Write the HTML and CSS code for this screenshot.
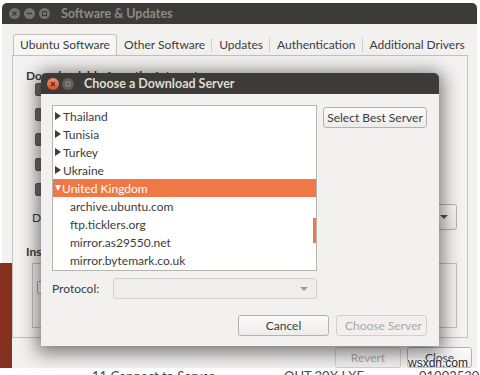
FILE: index.html
```html
<!DOCTYPE html>
<html lang="en">
<head>
    <meta charset="UTF-8">
    <meta name="viewport" content="width=device-width, initial-scale=1.0">
    <title>Software &amp; Updates - Choose a Download Server</title>
    <link rel="stylesheet" href="styles.css">
</head>
<body>
    <div class="screen">
        <div class="top-edge"></div>

        <div class="main-window">
            <div class="titlebar">
                <div class="wm-buttons">
                    <svg class="wm-btn" width="11" height="11" viewBox="0 0 11 11"><circle cx="5.5" cy="5.5" r="5.5" fill="#74736e"/><path d="M3.5 3.5 L7.5 7.5 M7.5 3.5 L3.5 7.5" stroke="#3c3b37" stroke-width="1.3"/></svg>
                    <svg class="wm-btn" width="11" height="11" viewBox="0 0 11 11"><circle cx="5.5" cy="5.5" r="5.5" fill="#74736e"/><path d="M3 5.5 H8" stroke="#3c3b37" stroke-width="1.4"/></svg>
                    <svg class="wm-btn" width="11" height="11" viewBox="0 0 11 11"><circle cx="5.5" cy="5.5" r="5.5" fill="#74736e"/><rect x="3.5" y="3.5" width="4" height="4" fill="none" stroke="#3c3b37" stroke-width="1"/></svg>
                </div>
                <span class="window-title inactive">Software &amp; Updates</span>
            </div>

            <div class="window-body">
                <div class="tabs">
                    <div class="tab active">Ubuntu Software</div>
                    <div class="tab">Other Software</div>
                    <div class="tab">Updates</div>
                    <div class="tab">Authentication</div>
                    <div class="tab last">Additional Drivers</div>
                </div>

                <div class="panel">
                    <div class="section-title">Downloadable from the Internet</div>
                    <div class="check-list">
                        <div class="check-row"><span class="checkbox checked"></span>Canonical-supported free and open-source software (main)</div>
                        <div class="check-row"><span class="checkbox checked"></span>Community-maintained free and open-source software (universe)</div>
                        <div class="check-row"><span class="checkbox checked"></span>Proprietary drivers for devices (restricted)</div>
                        <div class="check-row"><span class="checkbox checked"></span>Software restricted by copyright or legal issues (multiverse)</div>
                        <div class="check-row"><span class="checkbox mixed"></span>Source code</div>
                    </div>
                    <div class="download-row">
                        <span class="download-label">Download from:</span>
                        <div class="combo"><span>Server for United Kingdom</span><span class="combo-arrow"></span></div>
                    </div>
                    <div class="section-title cd-title">Installable from CD-ROM/DVD</div>
                    <div class="cd-frame">
                        <span class="checkbox"></span>
                    </div>
                </div>

                <div class="window-actions">
                    <button class="btn revert" disabled>Revert</button>
                    <button class="btn close-btn">Close</button>
                </div>
            </div>
        </div>

        <div class="task-strip">
            <div class="task-red"></div>
            <span class="task-text first">11 Connect to Server</span>
            <span class="task-sep"></span>
            <span class="task-text">OUT 30X LXE</span>
            <span class="task-text">01002530L</span>
        </div>

        <div class="wallpaper-edge"></div>

        <div class="dialog">
            <div class="titlebar dialog-titlebar">
                <div class="wm-buttons dialog-buttons">
                    <svg class="wm-btn" width="12" height="12" viewBox="0 0 12 12"><defs><linearGradient id="closeGrad" x1="0" y1="0" x2="0" y2="1"><stop offset="0" stop-color="#f7916a"/><stop offset="1" stop-color="#dd4d22"/></linearGradient></defs><circle cx="6" cy="6" r="6" fill="url(#closeGrad)"/><path d="M4 4 L8 8 M8 4 L4 8" stroke="#3c3b37" stroke-width="1.3"/></svg>
                    <svg class="wm-btn" width="12" height="12" viewBox="0 0 12 12"><circle cx="6" cy="6" r="6" fill="#5f5e5a"/><rect x="4" y="4" width="4" height="4" fill="none" stroke="#8e8c86" stroke-width="1"/></svg>
                </div>
                <span class="window-title">Choose a Download Server</span>
            </div>

            <div class="dialog-body">
                <div class="server-row">
                    <div class="tree">
                        <div class="tree-row"><span class="expander"></span>Thailand</div>
                        <div class="tree-row"><span class="expander"></span>Tunisia</div>
                        <div class="tree-row"><span class="expander"></span>Turkey</div>
                        <div class="tree-row"><span class="expander"></span>Ukraine</div>
                        <div class="tree-row selected"><span class="expander open"></span>United Kingdom</div>
                        <div class="tree-row child">archive.ubuntu.com</div>
                        <div class="tree-row child">ftp.ticklers.org</div>
                        <div class="tree-row child">mirror.as29550.net</div>
                        <div class="tree-row child">mirror.bytemark.co.uk</div>
                        <div class="tree-row child">mirror.ox.ac.uk</div>
                        <div class="scroll-indicator"></div>
                    </div>
                    <button class="btn best-server">Select Best Server</button>
                </div>

                <div class="protocol-row">
                    <span class="protocol-label">Protocol:</span>
                    <div class="combo disabled"><span></span><span class="combo-arrow"></span></div>
                </div>

                <div class="dialog-actions">
                    <button class="btn">Cancel</button>
                    <button class="btn" disabled>Choose Server</button>
                </div>
            </div>
        </div>

        <div class="watermark">wsxdn.com</div>
    </div>
</body>
</html>
```

FILE: styles.css
```css
* {
    box-sizing: border-box;
}

body {
    margin: 0;
    font-family: Lato, "Open Sans", sans-serif;
    font-size: 12px;
    color: #3c3c3c;
    background-color: #ffffff;
}

.screen {
    position: relative;
    width: 480px;
    height: 375px;
    overflow: hidden;
    background-color: #ffffff;
}

.top-edge {
    height: 3px;
}

/* main window behind */
.main-window {
    margin-left: 2px;
    width: 475px;
    height: 365px;
    background-color: #f2f1f0;
    border-radius: 5px 5px 0 0;
}

.titlebar {
    height: 21px;
    background-color: #3c3b37;
    border-radius: 5px 5px 0 0;
    display: flex;
    align-items: center;
    padding-left: 7px;
}

.wm-buttons {
    display: flex;
    gap: 4px;
}

.wm-btn {
    display: block;
}

.window-title {
    margin-left: 11px;
    font-weight: bold;
    font-size: 12.5px;
    color: #dfdbd2;
    white-space: nowrap;
}

.window-title.inactive {
    color: #8d8b86;
}

.window-body {
    padding: 10px 9px 0 10px;
}

.tabs {
    display: flex;
    height: 21px;
    margin-left: 1px;
    white-space: nowrap;
}

.tab {
    padding: 0 7px;
    line-height: 21px;
    position: relative;
}

.tab::after {
    content: "";
    position: absolute;
    right: 0;
    top: 4px;
    bottom: 3px;
    border-right: 1px solid #d3d0ca;
}

.tab.active {
    padding: 0 6px;
    background-color: #f7f6f5;
    border: 1px solid #c4c1ba;
    border-bottom: none;
    border-radius: 3px 3px 0 0;
    line-height: 20px;
}

.tab.active::after,
.tab.last::after {
    display: none;
}

.panel {
    height: 283px;
    border: 1px solid #c4c1ba;
    background-color: #f4f3f2;
    padding: 12px 10px 0 13px;
}

.section-title {
    font-weight: bold;
    line-height: 16px;
    white-space: nowrap;
}

.check-list {
    margin-left: 9px;
    margin-top: -3px;
}

.check-row {
    height: 25px;
    padding-top: 2px;
    display: flex;
    align-items: flex-start;
    gap: 6px;
    white-space: nowrap;
}

.checkbox {
    display: block;
    width: 13px;
    height: 13px;
    flex: none;
    border-radius: 2px;
    border: 1px solid #a9a6a0;
    background-color: #ffffff;
}

.checkbox.checked,
.checkbox.mixed {
    background-color: #6f6d68;
    border-color: #5b5955;
}

.download-row {
    margin-top: -2px;
    margin-left: 6px;
    height: 26px;
    display: flex;
    align-items: center;
    white-space: nowrap;
}

.download-label {
    width: 100px;
}

.combo {
    flex: 1;
    height: 26px;
    border: 1px solid #b8b5ae;
    border-radius: 3px;
    background: linear-gradient(#fbfbfa, #eeedeb);
    display: flex;
    align-items: center;
    justify-content: space-between;
    padding: 0 8px;
}

.combo-arrow {
    width: 0;
    height: 0;
    border-left: 4px solid transparent;
    border-right: 4px solid transparent;
    border-top: 4px solid #55534f;
}

.cd-title {
    margin-top: 14px;
}

.cd-frame {
    margin: 3px 0 0 6px;
    height: 65px;
    border: 1px solid #c4c1ba;
    padding: 17px 0 0 4px;
}

.window-actions {
    display: flex;
    justify-content: flex-end;
    gap: 6px;
    margin: 9px -4px 0 0;
}

.btn {
    font-family: inherit;
    font-size: 12px;
    color: #3c3c3c;
    height: 21px;
    padding: 0 8px;
    border: 1px solid #b5b2ab;
    border-radius: 3px;
    background: linear-gradient(#fcfcfb, #ecebe9);
    white-space: nowrap;
}

.btn:disabled {
    color: #a9a7a2;
    border-color: #d2cfca;
    background: #f1f0ef;
}

.revert {
    width: 66px;
}

.close-btn {
    width: 65px;
}

.task-strip {
    height: 7px;
    display: flex;
    overflow: hidden;
    align-items: flex-start;
    white-space: nowrap;
}

.task-red {
    width: 72px;
    flex: none;
    background-color: #86301f;
}

.task-text {
    font-size: 13px;
    line-height: 14px;
    margin-top: 1px;
    color: #4a4a4a;
    margin-left: 55px;
}

.task-text.first {
    margin-left: 20px;
}

.task-sep {
    margin-left: 14px;
    border-left: 1px solid #bdbdbd;
}

.wallpaper-edge {
    position: absolute;
    left: 0;
    top: 263px;
    width: 12px;
    height: 105px;
    background-color: #86301f;
}

/* dialog on top */
.dialog {
    position: absolute;
    left: 41px;
    top: 73px;
    width: 398px;
    height: 273px;
    background-color: #f2f1f0;
    border-radius: 5px 5px 0 0;
    box-shadow: 0 3px 18px 4px rgba(0, 0, 0, 0.5);
}

.dialog-titlebar {
    padding-left: 6px;
}

.dialog-buttons {
    gap: 3px;
}

.dialog-titlebar .window-title {
    margin-left: 10px;
}

.dialog-body {
    padding: 11px 12px 0 11px;
}

.server-row {
    display: flex;
    align-items: flex-start;
    gap: 6px;
}

.tree {
    position: relative;
    width: 265px;
    height: 166px;
    border: 1px solid #b8b5ae;
    background-color: #ffffff;
    padding-top: 1px;
    overflow: hidden;
}

.tree-row {
    height: 18px;
    display: flex;
    align-items: center;
    padding-left: 2px;
    white-space: nowrap;
}

.tree-row.child {
    padding-left: 17px;
}

.tree-row.selected {
    background-color: #f07746;
    color: #ffffff;
}

.expander {
    width: 0;
    height: 0;
    margin-right: 2px;
    border-top: 4px solid transparent;
    border-bottom: 4px solid transparent;
    border-left: 6px solid #3c3c3c;
}

.expander.open {
    border-left: 3.5px solid transparent;
    border-right: 3.5px solid transparent;
    border-top: 6px solid #ffffff;
    border-bottom: none;
    margin-right: 1px;
}

.scroll-indicator {
    position: absolute;
    right: 0;
    top: 112px;
    width: 3px;
    height: 25px;
    background-color: #f07746;
}

.best-server {
    margin-top: 2px;
    width: 104px;
    padding: 0;
}

.protocol-row {
    margin-top: 7px;
    display: flex;
    align-items: center;
    width: 265px;
}

.protocol-label {
    width: 61px;
}

.combo.disabled {
    height: 21px;
    border-color: #d2cfca;
    background: #efeeec;
    padding: 0 8px 0 0;
}

.combo.disabled .combo-arrow {
    border-top-color: #9a9893;
}

.dialog-actions {
    margin-top: 16px;
    display: flex;
    justify-content: flex-end;
    gap: 7px;
}

.dialog-actions .btn {
    width: 91px;
}

.watermark {
    position: absolute;
    left: 408px;
    top: 356px;
    font-family: "Liberation Sans", Arial, sans-serif;
    font-size: 12px;
    color: #1e1e1e;
    text-shadow: 0 0 2px #ffffff, 0 0 2px #ffffff, 0 0 3px #ffffff;
}
```
